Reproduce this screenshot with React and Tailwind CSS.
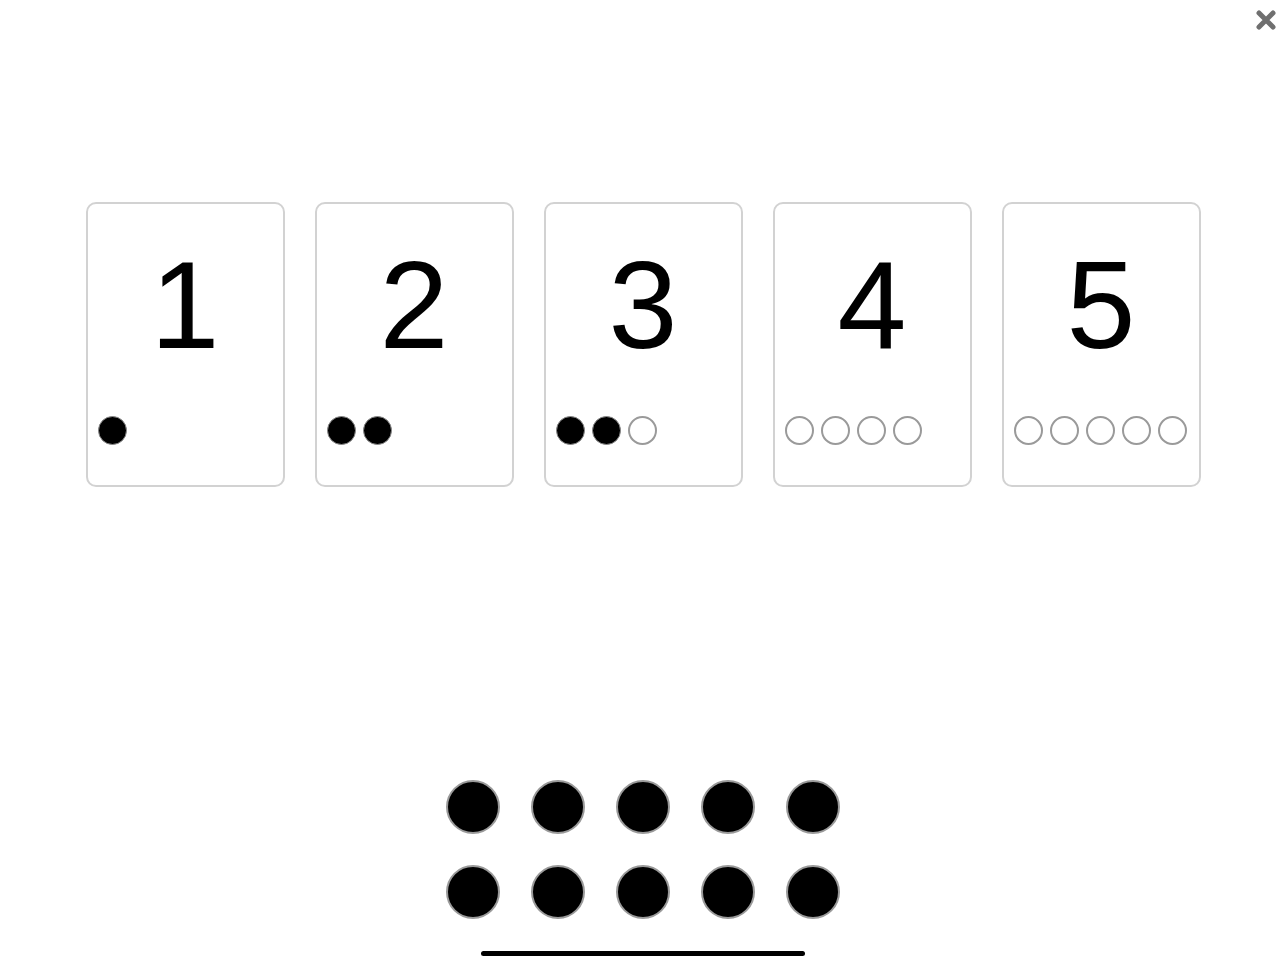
import React from 'react';

const cards = [
    { n: 1, filled: 1, total: 1 },
    { n: 2, filled: 2, total: 2 },
    { n: 3, filled: 2, total: 3 },
    { n: 4, filled: 0, total: 4 },
    { n: 5, filled: 0, total: 5 },
];

function Dot({ filled }) {
    return filled ? (
        <span className="block w-[29px] h-[29px] rounded-full bg-black border-[1.5px] border-[#8a8a8a]" />
    ) : (
        <span className="block w-[29px] h-[29px] rounded-full bg-white border-2 border-[#9a9a9a]" />
    );
}

function NumberCard({ n, filled, total }) {
    return (
        <div className="w-[199px] h-[285px] rounded-[10px] border-2 border-[#d2d2d2] bg-white flex flex-col">
            <div
                className="pt-[39px] text-center text-[124px] leading-none text-black"
                style={{ fontFamily: '"Liberation Sans", Arial, sans-serif' }}
            >
                {n}
            </div>
            <div className="mt-auto flex gap-[7px] pl-[10px] pb-[40px]">
                {Array.from({ length: total }).map((_, i) => (
                    <Dot key={i} filled={i < filled} />
                ))}
            </div>
        </div>
    );
}

export default function App() {
    return (
        <div className="relative w-[1286px] h-[964px] bg-white overflow-hidden flex flex-col">
            {/* close button */}
            <button className="absolute top-[9px] right-[9px] w-[22px] h-[22px] flex items-center justify-center">
                <svg viewBox="0 0 22 22" className="w-[22px] h-[22px]">
                    <path d="M4 4 L18 18 M18 4 L4 18" stroke="#6f6f6f" strokeWidth="5" strokeLinecap="round" />
                </svg>
            </button>

            {/* number cards */}
            <div className="pt-[202px] flex justify-center gap-[30px]">
                {cards.map((c) => (
                    <NumberCard key={c.n} {...c} />
                ))}
            </div>

            {/* counters tray */}
            <div className="mt-auto flex flex-col items-center pb-[8px]">
                <div className="grid grid-cols-5 gap-[31px]">
                    {Array.from({ length: 10 }).map((_, i) => (
                        <span key={i} className="block w-[54px] h-[54px] rounded-full bg-black border-2 border-[#9a9a9a]" />
                    ))}
                </div>
                <div className="mt-[32px] w-[324px] h-[5px] rounded-full bg-black" />
            </div>
        </div>
    );
}
